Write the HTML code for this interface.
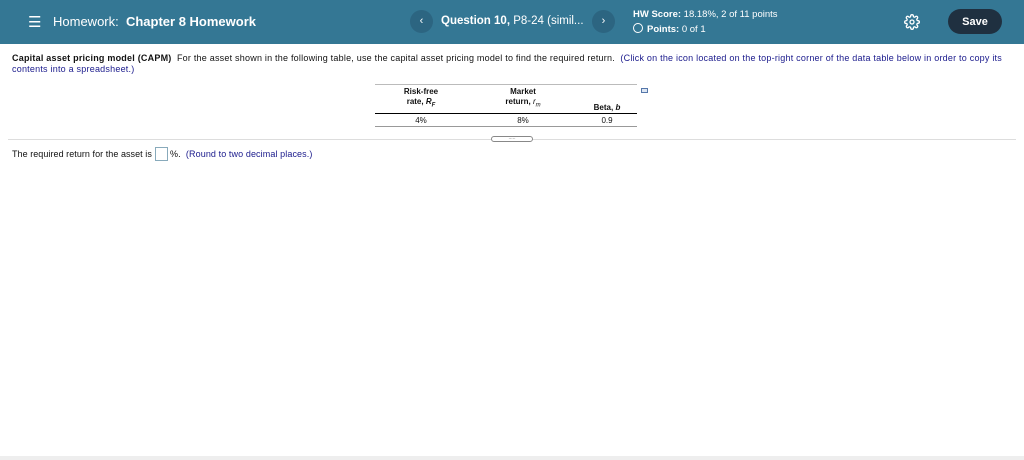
<!DOCTYPE html>
<html><head><meta charset="utf-8"><style>
*{margin:0;padding:0;box-sizing:border-box}
body{width:1024px;height:460px;background:#fff;font-family:"Liberation Sans",Arial,sans-serif;position:relative;overflow:hidden;color:#111}
.hdr{position:absolute;left:0;top:0;width:1024px;height:44px;background:#347794;color:#fff}
.abs{position:absolute}
.circ{position:absolute;width:23px;height:23px;border-radius:50%;background:#2c6581;color:#fff;font-size:11px;text-align:center;line-height:23px}
.t{font-size:8px;position:absolute;white-space:nowrap}
.p{font-size:9px;letter-spacing:0.22px}
.blue{color:#1a1a8c}
</style></head><body>
<div class="hdr">
 <div class="abs" style="left:28px;top:13px;font-size:15px">☰</div>
 <div class="abs" style="left:53px;top:14px;font-size:13px">Homework: &nbsp;<b>Chapter 8 Homework</b></div>
 <div class="circ" style="left:410px;top:10px">‹</div>
 <div class="abs" style="left:441px;top:15px;font-size:11.5px"><b>Question 10,</b> P8-24 (simil...</div>
 <div class="circ" style="left:592px;top:10px">›</div>
 <div class="abs" style="left:633px;top:9px;font-size:9.5px"><b>HW Score:</b> 18.18%, 2 of 11 points</div>
 <div class="abs" style="left:633px;top:23px;font-size:9.5px"><span style="display:inline-block;width:10px;height:10px;border:1.3px solid #fff;border-radius:50%;vertical-align:-1px;margin-right:4px"></span><b>Points:</b> 0 of 1</div>
 <svg class="abs" style="left:904px;top:14px" width="16" height="16" viewBox="0 0 24 24" fill="none" stroke="#fff" stroke-width="2"><circle cx="12" cy="12" r="3"/><path d="M19.4 15a1.7 1.7 0 0 0 .3 1.8l.1.1a2 2 0 1 1-2.8 2.8l-.1-.1a1.7 1.7 0 0 0-1.8-.3 1.7 1.7 0 0 0-1 1.5V21a2 2 0 1 1-4 0v-.1a1.7 1.7 0 0 0-1.1-1.5 1.7 1.7 0 0 0-1.8.3l-.1.1a2 2 0 1 1-2.8-2.8l.1-.1a1.7 1.7 0 0 0 .3-1.8 1.7 1.7 0 0 0-1.5-1H3a2 2 0 1 1 0-4h.1a1.7 1.7 0 0 0 1.5-1.100 1.7 1.7 0 0 0-.3-1.8l-.1-.1a2 2 0 1 1 2.8-2.8l.1.1a1.7 1.7 0 0 0 1.8.3H9a1.7 1.7 0 0 0 1-1.5V3a2 2 0 1 1 4 0v.1a1.7 1.7 0 0 0 1 1.5 1.7 1.7 0 0 0 1.8-.3l.1-.1a2 2 0 1 1 2.8 2.8l-.1.1a1.7 1.7 0 0 0-.3 1.8V9a1.7 1.7 0 0 0 1.5 1H21a2 2 0 1 1 0 4h-.1a1.7 1.7 0 0 0-1.5 1z"/></svg>
 <div class="abs" style="left:948px;top:9px;width:54px;height:25px;border-radius:13px;background:#1f3040;font-size:11px;font-weight:bold;text-align:center;line-height:27px">Save</div>
</div>
<div class="t p" style="left:12px;top:53px"><b>Capital asset pricing model (CAPM)</b>&nbsp; For the asset shown in the following table, use the capital asset pricing model to find the required return. &nbsp;<span class="blue">(Click on the icon located on the top-right corner of the data table below in order to copy its</span></div>
<div class="t p blue" style="left:12px;top:64px">contents into a spreadsheet.)</div>
<div class="abs" style="left:375px;top:84px;width:262px;border-top:1px solid #bbb"></div>
<div class="t" style="left:375px;top:87px;width:92px;text-align:center;line-height:10px;font-weight:bold">Risk-free<br>rate, <i>R<sub style="font-size:6px">F</sub></i></div>
<div class="t" style="left:477px;top:87px;width:92px;text-align:center;line-height:10px;font-weight:bold">Market<br>return, <i style="font-weight:normal">r<sub style="font-size:6px">m</sub></i></div>
<div class="t" style="left:577px;top:103px;width:60px;text-align:center;font-weight:bold">Beta, <i>b</i></div>
<div class="abs" style="left:375px;top:113px;width:262px;border-top:1px solid #000"></div>
<div class="t" style="left:375px;top:116px;width:92px;text-align:center">4%</div>
<div class="t" style="left:477px;top:116px;width:92px;text-align:center">8%</div>
<div class="t" style="left:577px;top:116px;width:60px;text-align:center">0.9</div>
<div class="abs" style="left:375px;top:126px;width:262px;border-top:1px solid #999"></div>
<div class="abs" style="left:641px;top:88px;width:7px;height:5px;border:1px solid #5577aa;background:#dde6f3"></div>
<div class="abs" style="left:8px;top:139px;width:1008px;border-top:1px solid #ddd"></div>
<div class="abs" style="left:491px;top:136px;width:42px;height:6px;border:1px solid #888;border-radius:3px;background:#fff;font-size:5px;text-align:center;line-height:3px;color:#666">.....</div>
<div class="t" style="left:12px;top:149px;font-size:9px;letter-spacing:0.05px">The required return for the asset is</div>
<div class="abs" style="left:155px;top:147px;width:13px;height:14px;border:1px solid #8ab;background:#fff"></div>
<div class="t" style="left:170px;top:149px;font-size:9px;letter-spacing:0.1px">%. &nbsp;<span class="blue">(Round to two decimal places.)</span></div>
<div class="abs" style="left:0;top:456px;width:1024px;height:4px;background:#eee"></div>
</body></html>
